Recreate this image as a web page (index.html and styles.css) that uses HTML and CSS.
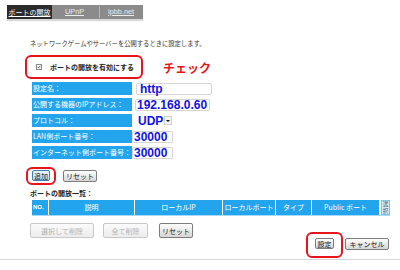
FILE: index.html
```html
<!DOCTYPE html>
<html lang="ja">
<head>
<meta charset="utf-8">
<link rel="stylesheet" href="styles.css">
</head>
<body>
<nav class="tabs">
  <a class="tab active">ポートの開放</a>
  <a class="tab upnp">UPnP</a>
  <span class="sep"></span>
  <a class="tab ipbb">ipbb.net</a>
</nav>
<p class="intro">ネットワークゲームやサーバーを公開するときに設定します。</p>
<div class="enable-row">
  <label class="enable"><span class="cb"><svg width="6" height="6" viewBox="0 0 6 6"><path d="M1.2 3 L2.5 4.4 L4.8 1.4" fill="none" stroke="#333" stroke-width="1"/></svg></span>ポートの開放を有効にする</label>
  <span class="callout">チェック</span>
</div>
<div class="form">
  <div class="lbl">設定名：</div>
  <div class="val"><span class="box b1">http</span></div>
  <div class="lbl">公開する機器のIPアドレス：</div>
  <div class="val"><span class="box b2">192.168.0.60</span></div>
  <div class="lbl">プロトコル：</div>
  <div class="val"><span class="proto">UDP</span><span class="arrow"></span></div>
  <div class="lbl">LAN側ポート番号：</div>
  <div class="val"><span class="box b4">30000</span></div>
  <div class="lbl">インターネット側ポート番号：</div>
  <div class="val"><span class="box b4">30000</span></div>
</div>
<div class="btn-row">
  <div class="hl hl-add"><span class="btn add">追加</span></div>
  <span class="btn reset1">リセット</span>
</div>
<p class="list-title">ポートの開放一覧：</p>
<div class="thead-wrap">
  <div class="thead">
    <div class="th no">NO.</div>
    <div class="th">説明</div>
    <div class="th">ローカルIP</div>
    <div class="th">ローカルポート</div>
    <div class="th">タイプ</div>
    <div class="th">Public ポート</div>
    <div class="th sel">選<br>択</div>
  </div>
</div>
<div class="footer-row">
  <div class="left-btns">
    <span class="btn dis w64">選択して削除</span>
    <span class="btn dis w45">全て削除</span>
    <span class="btn w34">リセット</span>
  </div>
  <div class="right-btns">
    <div class="hl hl-set"><span class="btn set">設定</span></div>
    <span class="btn cancel">キャンセル</span>
  </div>
</div>
<div class="rule"></div>
</body>
</html>
```
FILE: styles.css
```css
* { box-sizing: border-box; margin: 0; padding: 0; }
body {
  margin: 0;
  width: 400px;
  height: 270px;
  overflow: hidden;
  background: #fff;
  font-family: "Noto Sans CJK JP", "Noto Sans", sans-serif;
  font-size: 7px;
  color: #222;
}
.tabs {
  display: flex;
  align-items: center;
  margin: 5px 0 0 7px;
  width: 136px;
  height: 14px;
  background: #8b8b8b;
  box-shadow: 0 2px 1px #d8d8d8;
}
.tab {
  color: #ececec;
  text-decoration: underline;
  line-height: 14px;
  font-family: "Liberation Sans", sans-serif;
  font-size: 7.3px;
}
.tab.active {
  width: 45px;
  background: #2b2b2b;
  color: #fff;
  text-align: center;
  font-family: "Noto Sans CJK JP", sans-serif;
  font-size: 7px;
}
.upnp { margin-left: 13px; }
.sep { width: 1px; height: 12px; background: #b5b5b5; margin-left: 15px; }
.ipbb { margin-left: 8px; }
.intro {
  margin: 20px 0 0 30px;
  font-size: 6.3px;
  line-height: 9px;
  color: #333;
}
.enable-row {
  display: flex;
  align-items: center;
  margin-top: 7px;
}
.hl {
  border: 2px solid #e8141c;
  border-radius: 6px;
}
.enable {
  margin-left: 25px;
  width: 118px;
  height: 24px;
  border: 2px solid #e8141c;
  border-radius: 6px;
  display: flex;
  align-items: center;
  padding-left: 9px;
  font-weight: bold;
  color: #222;
  gap: 8px;
}
.cb {
  width: 6px;
  height: 6px;
  border: 1px solid #8a8a8a;
  background: #f2f2f2;
  display: flex;
}
.cb svg { width: 4px; height: 4px; }
.callout {
  margin-left: 20px;
  font-size: 12px;
  font-weight: bold;
  color: #e8141c;
}
.form {
  display: grid;
  grid-template-columns: 100px auto;
  grid-auto-rows: 13px;
  row-gap: 3px;
  margin: 3px 0 0 32px;
}
.lbl {
  background: #22a5ec;
  color: #fff;
  padding-left: 1px;
  line-height: 13px;
  white-space: nowrap;
}
.val { display: flex; align-items: center; }
.box {
  display: block;
  height: 12px;
  border: 1px solid #d4d4d4;
  border-radius: 2px;
  font-family: "Liberation Sans", sans-serif;
  font-weight: bold;
  font-size: 12px;
  line-height: 10px;
  color: #1212e0;
}
.b1 { margin-left: 4px; width: 76px; padding-left: 3px; }
.b2 { margin-left: 3px; width: 75px; padding-left: 1px; }
.b4 { margin-left: 0; width: 41px; padding-left: 1px; }
.proto {
  margin-left: 6px;
  font-family: "Liberation Sans", sans-serif;
  font-weight: bold;
  font-size: 12px;
  line-height: 12px;
  color: #1212e0;
}
.arrow {
  position: relative;
  width: 8px;
  height: 9px;
  margin-left: 1px;
  border: 1px solid #cfcfcf;
  background: #f6f6f6;
}
.arrow::after {
  content: "";
  position: absolute;
  left: 1px;
  top: 3px;
  border-left: 2px solid transparent;
  border-right: 2px solid transparent;
  border-top: 2px solid #111;
}
.btn-row {
  display: flex;
  align-items: center;
  margin: 8px 0 0 26px;
}
.hl-add {
  width: 30px;
  height: 18px;
  padding: 1px 0 0 4px;
}
.btn {
  display: flex;
  align-items: center;
  justify-content: center;
  border: 1px solid #7c7c7c;
  border-radius: 2px;
  background: linear-gradient(#fdfdfd, #d6d6d6);
  color: #111;
  font-size: 7px;
  white-space: nowrap;
}
.add {
  width: 18px;
  height: 11px;
  background: linear-gradient(#eaf5fc, #c6e3f5);
  border-color: #3c7fb0;
}
.reset1 { margin-left: 7px; width: 34px; height: 12px; }
.list-title {
  margin: 4px 0 0 30px;
  font-weight: bold;
  line-height: 9px;
}
.thead-wrap {
  margin: 2px 0 0 32px;
  width: 358px;
  border-bottom: 1px solid #a8d8f8;
}
.thead {
  display: grid;
  grid-template-columns: 16px 85px 87px 52px 35px 67px 10px;
  column-gap: 1px;
  height: 15px;
}
.th {
  background: #22a5ec;
  color: #fff;
  text-align: center;
  line-height: 15px;
  white-space: nowrap;
}
.th.no { text-align: left; padding-left: 1px; font-weight: bold; font-family: "Liberation Sans", sans-serif; font-size: 6px; }
.th.sel {
  margin-left: 1px;
  background: #d6e9f6;
  color: #4a5a6a;
  border: 1px solid #7cc3ee;
  font-size: 5.5px;
  line-height: 6.5px;
  padding-top: 0;
}
.footer-row {
  display: flex;
  align-items: flex-start;
}
.left-btns {
  display: flex;
  margin: 7px 0 0 30px;
}
.left-btns .btn { height: 15px; }
.dis {
  border-color: #c8c8c8;
  background: linear-gradient(#fbfbfb, #ececec);
  color: #b4b4b4;
}
.w64 { width: 64px; }
.w45 { width: 45px; margin-left: 9px; }
.w34 { width: 34px; margin-left: 11px; }
.right-btns {
  display: flex;
  align-items: flex-start;
  margin: 16px 11px 0 auto;
}
.hl-set {
  width: 37px;
  height: 26px;
  padding: 4px 0 0 7px;
}
.set { width: 19px; height: 11px; }
.cancel { width: 44px; height: 12px; margin: 6px 0 0 2px; }
.rule {
  margin-top: 1px;
  height: 1px;
  background: #d8d8d8;
}
```
